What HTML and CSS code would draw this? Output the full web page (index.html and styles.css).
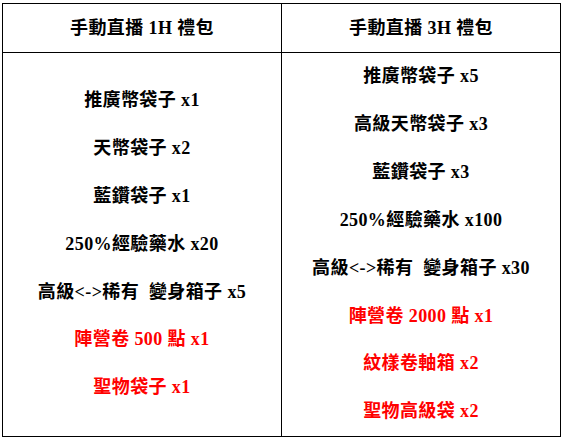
FILE: index.html
```html
<!DOCTYPE html>
<html lang="zh-Hant">
<head>
<meta charset="utf-8">
<link rel="stylesheet" href="styles.css">
</head>
<body>
<table class="gifts">
  <colgroup><col class="c1"><col class="c2"></colgroup>
  <tr class="head">
    <td>手動直播 1H 禮包</td>
    <td>手動直播 3H 禮包</td>
  </tr>
  <tr class="body">
    <td>
      <div class="item">推廣幣袋子 x1</div>
      <div class="item">天幣袋子 x2</div>
      <div class="item">藍鑽袋子 x1</div>
      <div class="item">250%經驗藥水 x20</div>
      <div class="item">高級&lt;-&gt;稀有&nbsp; 變身箱子 x5</div>
      <div class="item red">陣營卷 500 點 x1</div>
      <div class="item red">聖物袋子 x1</div>
    </td>
    <td>
      <div class="item">推廣幣袋子 x5</div>
      <div class="item">高級天幣袋子 x3</div>
      <div class="item">藍鑽袋子 x3</div>
      <div class="item">250%經驗藥水 x100</div>
      <div class="item">高級&lt;-&gt;稀有&nbsp; 變身箱子 x30</div>
      <div class="item red">陣營卷 2000 點 x1</div>
      <div class="item red">紋樣卷軸箱 x2</div>
      <div class="item red">聖物高級袋 x2</div>
    </td>
  </tr>
</table>
</body>
</html>
```
FILE: styles.css
```css
html, body {
  margin: 0;
  background: #fff;
}
body {
  padding: 3px 0 0 2px;
  font-family: "Liberation Serif", "Noto Sans CJK TC", serif;
  font-weight: bold;
  font-size: 18px;
  letter-spacing: 0.4px;
  color: #000;
}
.gifts {
  border-collapse: collapse;
  table-layout: fixed;
  width: 558px;
}
.c1 { width: 279px; }
.c2 { width: 279px; }
.gifts td {
  border: 1px solid #000;
  padding: 0;
  text-align: center;
  vertical-align: middle;
}
.head td {
  height: 48px;
  line-height: 48px;
}
.item {
  line-height: 47.9px;
  white-space: nowrap;
}
.red {
  color: #f00;
}
```
